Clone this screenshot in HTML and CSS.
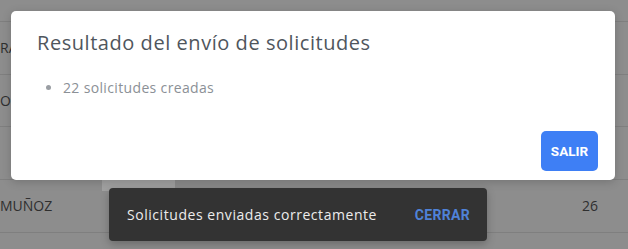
FILE: index.html
```html
<!DOCTYPE html>
<html lang="es">
<head>
<meta charset="utf-8">
<title>Resultado</title>
<link rel="stylesheet" href="styles.css">
</head>
<body>
<div class="page">
  <div class="table">
    <div class="row row-top"><span class="cell-name"></span><span class="cell-mid"></span><span class="cell-num"></span></div>
    <div class="row"><span class="cell-name clip">RAMÍREZ</span><span class="cell-mid"></span><span class="cell-num"></span></div>
    <div class="row"><span class="cell-name clip">ORTIZ</span><span class="cell-mid"></span><span class="cell-num"></span></div>
    <div class="row"><span class="cell-name"></span><span class="cell-mid"></span><span class="cell-num"></span></div>
    <div class="row"><span class="cell-name">MUÑOZ</span><span class="cell-mid"><span class="chip"></span></span><span class="cell-num">26</span></div>
    <div class="row row-last"><span class="cell-name"></span><span class="cell-mid"></span><span class="cell-num"></span></div>
  </div>

  <div class="dialog">
    <h2 class="dialog-title">Resultado del envío de solicitudes</h2>
    <ul class="dialog-list">
      <li>22 solicitudes creadas</li>
    </ul>
    <div class="dialog-actions">
      <button class="btn-primary">SALIR</button>
    </div>
  </div>

  <div class="snackbar">
    <span class="snackbar-text">Solicitudes enviadas correctamente</span>
    <button class="snackbar-action">CERRAR</button>
  </div>
</div>
</body>
</html>
```

FILE: styles.css
```css
* { box-sizing: border-box; }
html, body { margin: 0; padding: 0; }
body {
  width: 628px;
  height: 249px;
  overflow: hidden;
  background: #8d8d8d;
  font-family: "Open Sans", "Liberation Sans", sans-serif;
}
.page {
  position: relative;
  width: 628px;
  height: 249px;
  overflow: hidden;
}
.table {
  display: flex;
  flex-direction: column;
}
.row {
  height: 52.7px;
  border-bottom: 1px solid #7f7f7f;
  display: grid;
  grid-template-columns: 102px 1fr 40px;
  align-items: center;
  padding-right: 30px;
  font-size: 14px;
  color: #2f2f2f;
}
.row-top { height: 22px; }
.row-last { height: 16px; border-bottom: none; }
.cell-name { white-space: nowrap; }
.clip { display: block; width: 11px; overflow: hidden; }
.cell-mid { align-self: stretch; display: flex; }
.cell-num { text-align: right; }
.chip {
  width: 73px;
  height: 11px;
  background: #a2a2a2;
}
.dialog {
  position: absolute;
  left: 11px;
  top: 11px;
  width: 604px;
  height: 169px;
  background: #fff;
  border-radius: 5px;
  box-shadow: 0 2px 10px rgba(0,0,0,0.18);
  padding: 18px 17px 9px 26px;
  display: flex;
  flex-direction: column;
}
.dialog-title {
  margin: 0;
  font-weight: 400;
  font-size: 20px;
  line-height: 28px;
  letter-spacing: 0.55px;
  color: #4f565d;
}
.dialog-list {
  margin: 21px 0 0 0;
  padding-left: 26px;
  font-size: 14px;
  letter-spacing: 0.35px;
  color: #8b9096;
  line-height: 20px;
}
.dialog-list li::marker { color: #9a9ea3; }
.dialog-actions {
  margin-top: auto;
  display: flex;
  justify-content: flex-end;
}
.btn-primary {
  width: 57px;
  height: 40px;
  border: none;
  border-radius: 5px;
  background: #3e7ff5;
  color: #fff;
  font-family: Roboto, "Liberation Sans", sans-serif;
  font-weight: 700;
  font-size: 13.5px;
  padding: 0;
}
.snackbar {
  position: absolute;
  left: 109px;
  top: 188px;
  width: 378px;
  height: 53px;
  background: #333333;
  border-radius: 4px;
  box-shadow: 0 3px 8px rgba(0,0,0,0.25);
  display: flex;
  align-items: center;
  padding: 0 17px 0 18px;
}
.snackbar-text {
  color: #ececec;
  font-size: 14px;
  font-weight: 500;
  letter-spacing: 0.55px;
  flex: 1;
}
.snackbar-action {
  background: none;
  border: none;
  padding: 0;
  color: #4f82d8;
  font-family: Roboto, "Liberation Sans", sans-serif;
  font-weight: 700;
  font-size: 14px;
  letter-spacing: 0.3px;
}
```
